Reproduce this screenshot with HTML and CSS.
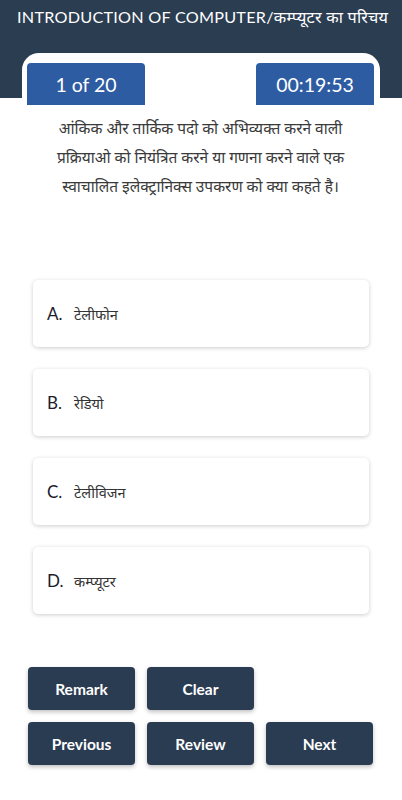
FILE: index.html
```html
<!DOCTYPE html>
<html lang="hi">
<head>
<meta charset="utf-8">
<title>Quiz</title>
<link rel="stylesheet" href="styles.css">
</head>
<body>
<div class="top">
  <div class="title">INTRODUCTION OF COMPUTER/कम्प्यूटर का परिचय</div>
  <div class="card">
    <div class="badges">
      <div class="badge">1 of 20</div>
      <div class="badge">00:19:53</div>
    </div>
    <p class="question">आंकिक और तार्किक पदो को अभिव्यक्त करने वाली<br>प्रक्रियाओ को नियंत्रित करने या गणना करने वाले एक<br>स्वाचालित इलेक्ट्रानिक्स उपकरण को क्या कहते है।</p>
  </div>
</div>
<div class="options">
  <div class="option"><span class="letter">A.</span><span class="otext">टेलीफोन</span></div>
  <div class="option"><span class="letter">B.</span><span class="otext">रेडियो</span></div>
  <div class="option"><span class="letter">C.</span><span class="otext">टेलीविजन</span></div>
  <div class="option"><span class="letter">D.</span><span class="otext">कम्प्यूटर</span></div>
</div>
<div class="actions">
  <div class="row">
    <button class="btn">Remark</button>
    <button class="btn">Clear</button>
  </div>
  <div class="row">
    <button class="btn">Previous</button>
    <button class="btn">Review</button>
    <button class="btn">Next</button>
  </div>
</div>
</body>
</html>
```
FILE: styles.css
```css
* { box-sizing: border-box; }
html, body { margin: 0; padding: 0; }
body {
  width: 402px;
  height: 800px;
  background: #ffffff;
  font-family: "Lato", "Noto Sans", "Noto Sans CJK SC", sans-serif;
  overflow: hidden;
}
.top {
  background: linear-gradient(to bottom, #2b3d51 0, #2b3d51 98px, #ffffff 98px);
  padding-top: 6px;
}
.title {
  color: #ffffff;
  font-size: 16.2px;
  line-height: 22px;
  height: 22px;
  padding-left: 17px;
  white-space: nowrap;
  letter-spacing: 0.25px;
}
.card {
  margin: 25px 22px 0 22px;
  background: #ffffff;
  border-radius: 17px 17px 0 0;
  padding: 10px 6px 0 5px;
}
.badges {
  display: flex;
  justify-content: space-between;
}
.badge {
  width: 118px;
  height: 42px;
  background: #2e5ca3;
  color: #ffffff;
  border-radius: 4px 4px 0 0;
  font-size: 19.5px;
  display: flex;
  align-items: center;
  justify-content: center;
}
.question {
  margin: 9px 0 0 0;
  text-align: center;
  color: #3a3a3a;
  font-size: 15.5px;
  line-height: 29px;
  white-space: nowrap;
}
.options {
  margin-top: 79px;
  padding: 0 33px;
  display: flex;
  flex-direction: column;
  gap: 22px;
}
.option {
  height: 67px;
  background: #ffffff;
  border-radius: 5px;
  box-shadow: 0 1px 4px rgba(0, 0, 0, 0.2);
  display: flex;
  align-items: center;
  padding-left: 14px;
}
.letter {
  font-size: 17px;
  color: #1c1c2c;
  width: 27px;
}
.otext {
  font-size: 14.5px;
  color: #333333;
}
.actions {
  margin-top: 53px;
  padding-left: 28px;
  display: flex;
  flex-direction: column;
  gap: 12px;
}
.row {
  display: flex;
  gap: 12px;
}
.btn {
  width: 107px;
  height: 43px;
  border: none;
  border-radius: 4px;
  background: #2a3c52;
  color: #ffffff;
  font-family: "Lato", "Noto Sans", sans-serif;
  font-weight: 700;
  font-size: 15.5px;
  box-shadow: 0 2px 4px rgba(0, 0, 0, 0.25);
  padding: 0;
}
```
